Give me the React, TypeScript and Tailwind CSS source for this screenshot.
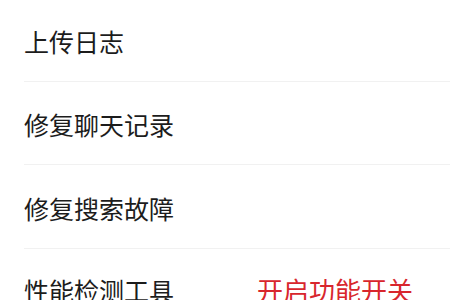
import React from "react";

const rows = ["上传日志", "修复聊天记录", "修复搜索故障"];

export default function App() {
  return (
    <div className="w-[450px] h-[300px] overflow-hidden bg-white" style={{ fontFamily: '"Noto Sans CJK SC", "Noto Sans", sans-serif' }}>
      <div className="-mt-[2px] pl-[24px]">
        {rows.map((r) => (
          <div key={r} className="h-[83.5px] flex items-center border-b-[1.5px] border-[#f1f1f1] text-[25px] leading-none text-[#1c1c1c]">
            <span className="mt-[4px]">{r}</span>
          </div>
        ))}
        <div className="h-[83.5px] flex items-center text-[25px] leading-none">
          <span className="w-[233px] text-[#1c1c1c]">性能检测工具</span>
          <span className="text-[#d8262d] text-[26px]">开启功能开关</span>
        </div>
      </div>
    </div>
  );
}
